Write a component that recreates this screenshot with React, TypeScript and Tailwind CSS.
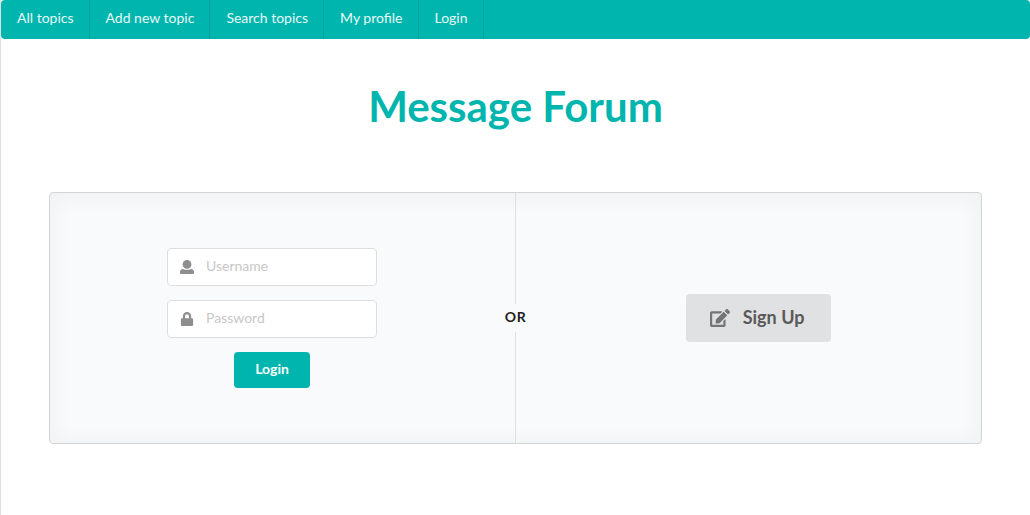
import { FaLock, FaEdit } from "react-icons/fa";

const items = ["All topics", "Add new topic", "Search topics", "My profile", "Login"];

function UserIcon() {
  return (
    <svg viewBox="0 0 512 512" className="h-[14px] w-[14px]" fill="currentColor">
      <circle cx="256" cy="160" r="160" />
      <path d="M110 326c88 42 204 42 292 0 62 0 110 48 110 108v30c0 26.500-21.500 48-48 48H48c-26.500 0-48-21.500-48-48v-30c0-60 48-108 110-108z" />
    </svg>
  );
}

function Field({ label, type, icon }: { label: string; type: string; icon: React.ReactNode }) {
  return (
    <label className="flex h-[38px] w-[210px] items-center rounded-[4px] border border-[#dedede] bg-white">
      <span className="flex w-[38px] shrink-0 justify-center text-[#8e8e8e]">{icon}</span>
      <input
        type={type}
        placeholder={label}
        className="w-full min-w-0 bg-transparent pb-[3px] text-[14px] leading-[17px] outline-none placeholder:text-[#c7c7c7]"
      />
    </label>
  );
}

export default function App() {
  return (
    <div className="h-[515px] overflow-hidden border-l border-[#dcdfe6] bg-white font-['Lato',sans-serif] text-[14px] text-[#212121]">
      <nav className="flex h-[39px] rounded-[4px] bg-[#00b5ad] text-white/90">
        {items.map((item) => (
          <a key={item} className="flex items-center border-r border-black/10 pr-[15px] pb-[3px] pl-4 leading-none">
            {item}
          </a>
        ))}
      </nav>
      <h1 className="mt-[40px] text-center text-[42px] font-bold leading-[54px] text-[#00b5ad]">Message Forum</h1>
      <main className="mx-12 mt-[59px] grid h-[252px] grid-cols-[1fr_25px_1fr] rounded-[4px] border border-[#d4d4d5] bg-[#f9fafb] shadow-[inset_0_2px_25px_0_rgba(34,36,38,0.05)]">
        <section className="flex flex-col items-center pt-[55px] pr-[9px]">
          <Field label="Username" type="text" icon={<UserIcon />} />
          <div className="h-[14px]" />
          <Field label="Password" type="password" icon={<FaLock size={14} />} />
          <button className="mt-[14px] h-[36px] w-[76px] rounded-[4px] bg-[#00b5ad] pb-[3px] font-bold text-white">Login</button>
        </section>
        <div className="flex flex-col items-center">
          <div className="w-px flex-1 bg-[#dedfdf]" />
          <span className="flex h-[28px] items-center pb-[3px] text-[14px] font-bold tracking-[0.7px]">OR</span>
          <div className="w-px flex-1 bg-[#dedfdf]" />
        </div>
        <section className="flex items-center justify-center pl-[8px]">
          <button className="flex h-[48px] w-[145px] items-center rounded-[4px] bg-[#e0e1e2] pl-[24px] text-[18px] font-bold text-[#5a5a5a]">
            <FaEdit className="mr-[12.7px] h-[18px] w-[20px] text-[#747474]" />
            <span className="pb-[2px]">Sign Up</span>
          </button>
        </section>
      </main>
    </div>
  );
}
